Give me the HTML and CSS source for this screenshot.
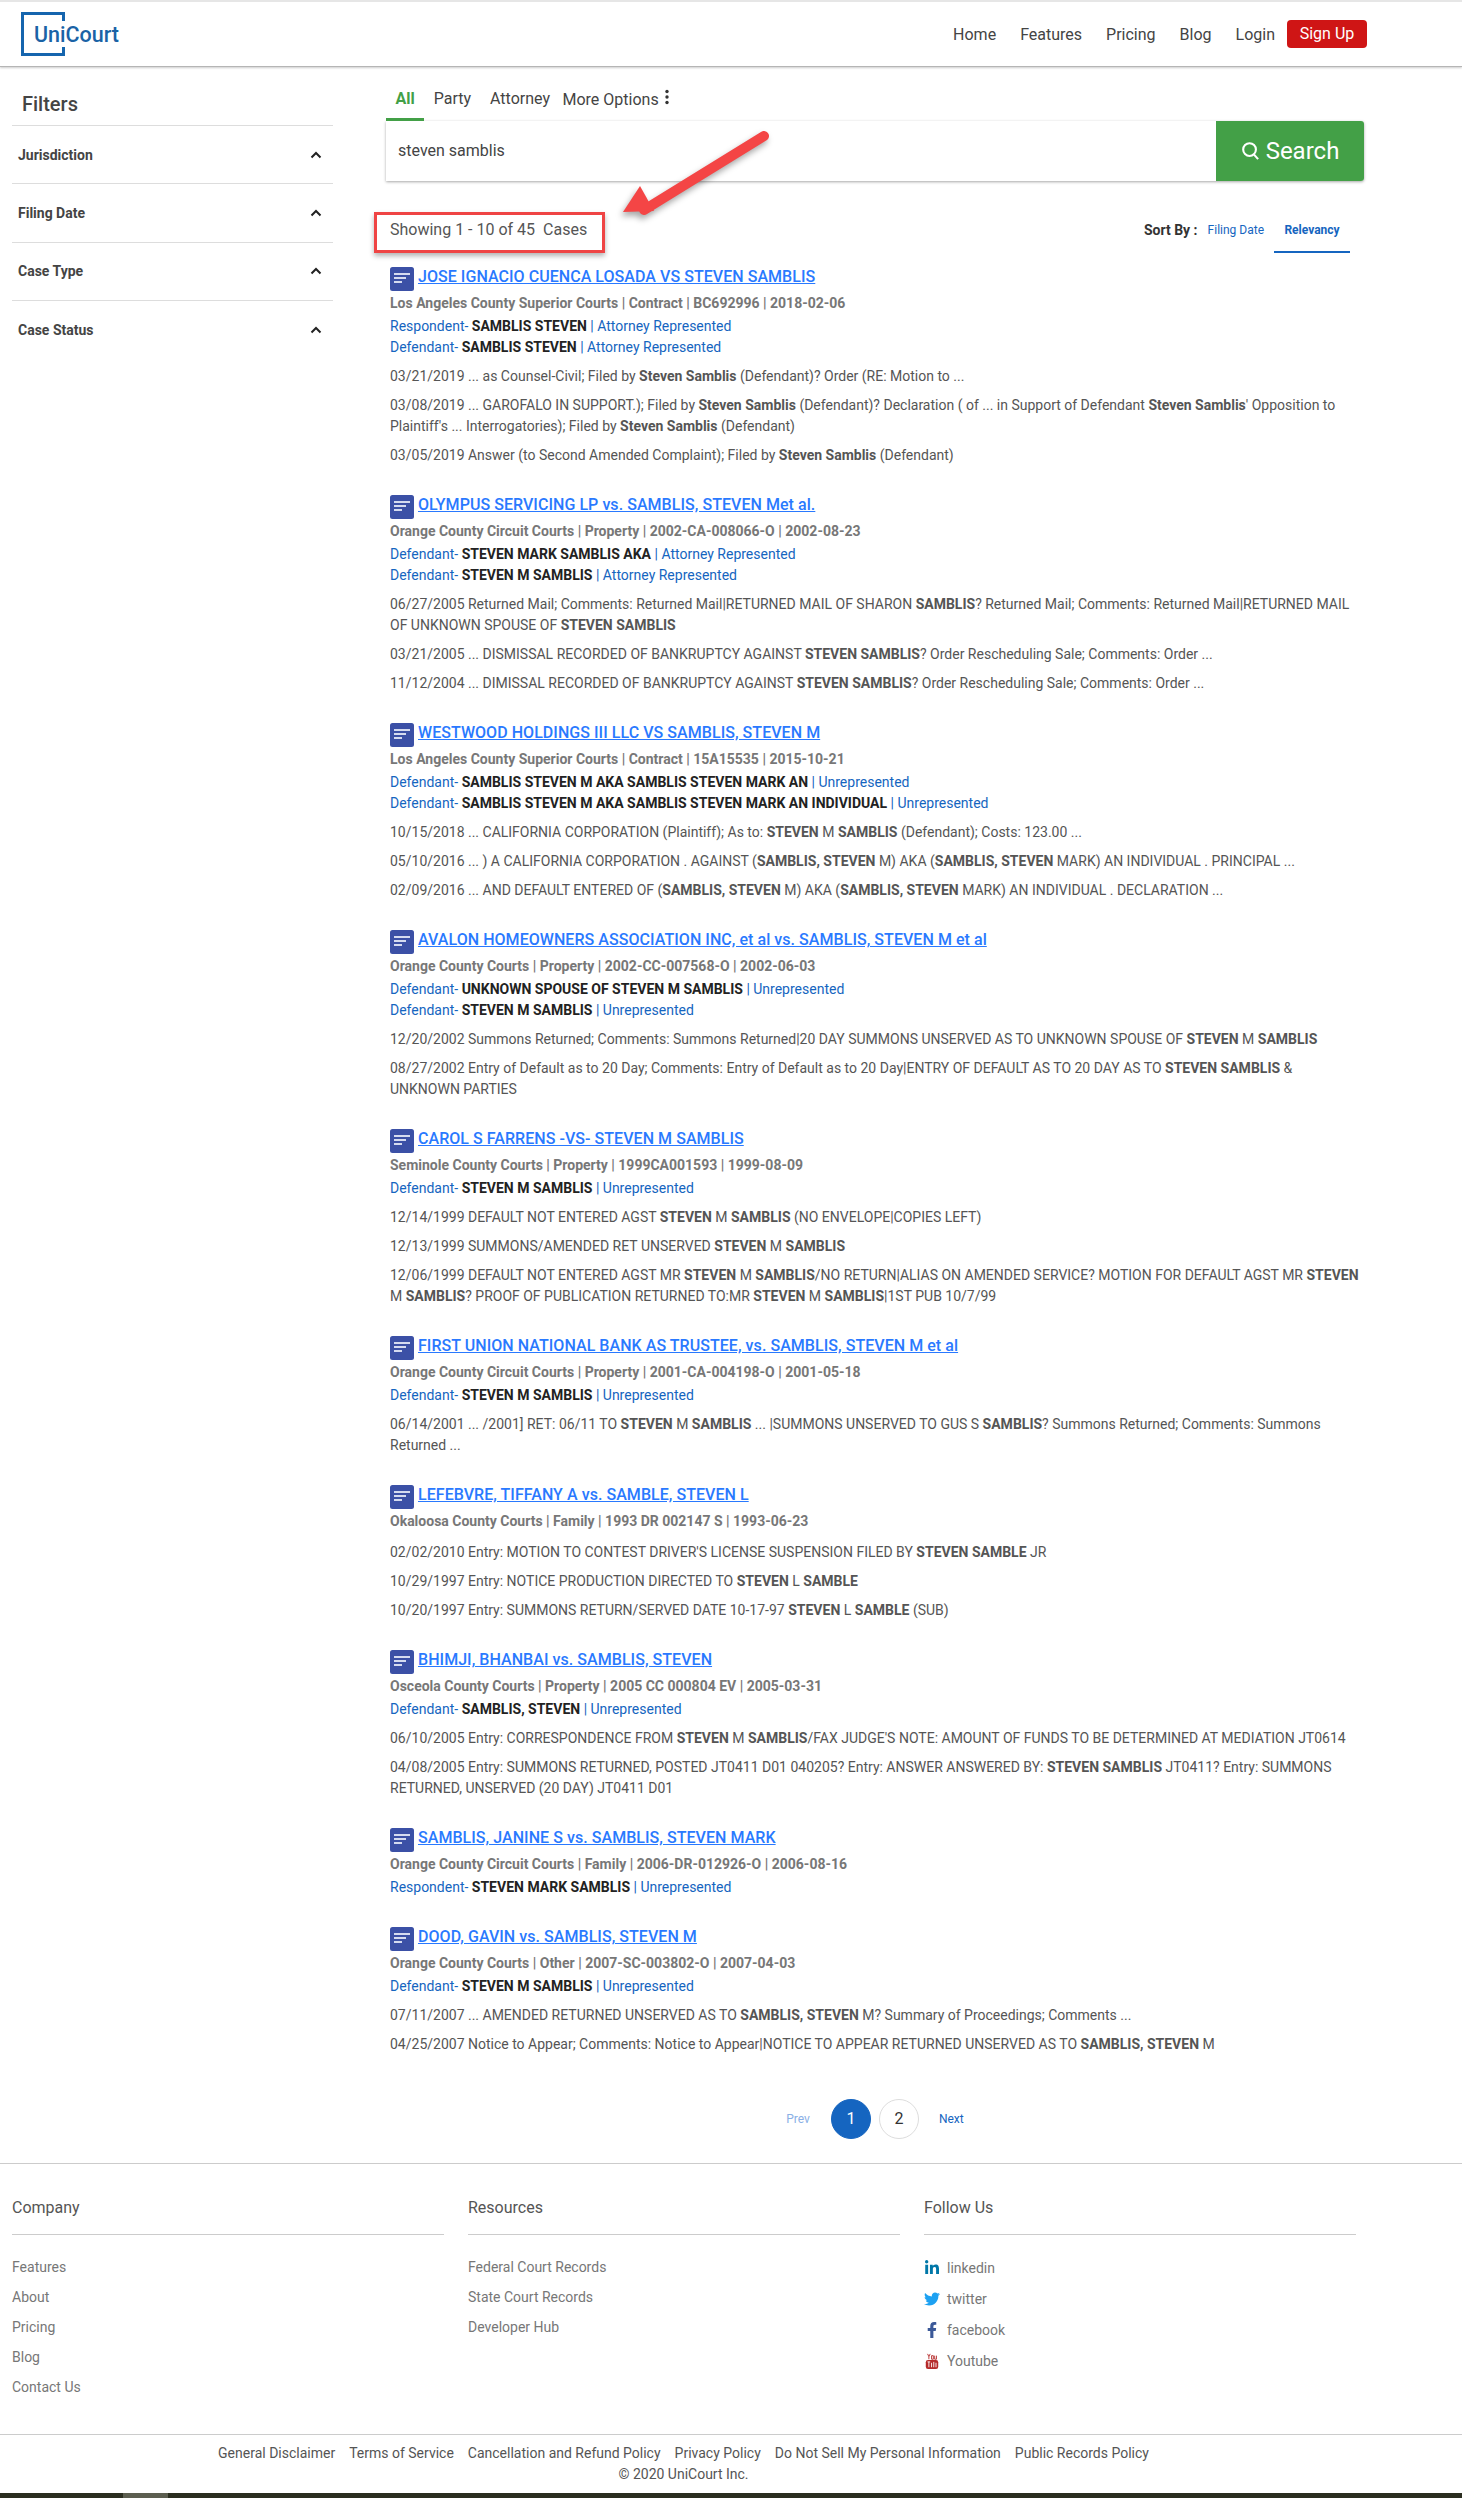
FILE: index.html
```html
<!DOCTYPE html>
<html lang="en">
<head>
    <meta charset="UTF-8">
    <title>UniCourt - steven samblis</title>
    <link rel="stylesheet" href="styles.css">
</head>
<body>
    <header class="topbar">
        <a class="logo" href="#"><span>UniCourt</span></a>
        <nav class="topnav">
            <a href="#">Home</a>
            <a href="#">Features</a>
            <a href="#">Pricing</a>
            <a href="#">Blog</a>
            <a href="#">Login</a>
            <a class="signup" href="#">Sign Up</a>
        </nav>
    </header>

    <div class="page">
        <aside class="filters">
            <h2>Filters</h2>
            <div class="filter"><span>Jurisdiction</span><svg viewBox="0 0 12 8"><polyline points="1.5,6.5 6,2 10.5,6.5"/></svg></div>
            <div class="filter"><span>Filing Date</span><svg viewBox="0 0 12 8"><polyline points="1.5,6.5 6,2 10.5,6.5"/></svg></div>
            <div class="filter"><span>Case Type</span><svg viewBox="0 0 12 8"><polyline points="1.5,6.5 6,2 10.5,6.5"/></svg></div>
            <div class="filter"><span>Case Status</span><svg viewBox="0 0 12 8"><polyline points="1.5,6.5 6,2 10.5,6.5"/></svg></div>
        </aside>

        <main class="content">
            <div class="tabs">
                <a class="tab active" href="#">All</a>
                <a class="tab" href="#">Party</a>
                <a class="tab" href="#">Attorney</a>
                <a class="tab more" href="#">More Options
                    <svg viewBox="0 0 4 16"><circle cx="2" cy="2.5" r="1.7"/><circle cx="2" cy="8" r="1.7"/><circle cx="2" cy="13.5" r="1.7"/></svg>
                </a>
            </div>

            <div class="searchbar">
                <div class="query">steven samblis</div>
                <button class="searchbtn">
                    <svg viewBox="0 0 20 20"><circle cx="9" cy="8.5" r="6.7"/><line x1="13.5" y1="13.5" x2="18" y2="18.5"/></svg>
                    Search
                </button>
            </div>

            <div class="toolbar">
                <div class="showing">Showing 1 - 10 of 45&nbsp; Cases</div>
                <div class="sort">
                    <b>Sort By :</b>
                    <a href="#">Filing Date</a>
                    <a class="current" href="#">Relevancy</a>
                </div>
            </div>

            <article class="result">
                <h3><svg class="doc" viewBox="0 0 24 24"><rect width="24" height="24" rx="2.5"/><path d="M4 6h16v2H4zM4 10h12v2H4zM4 14h8v2H4z"/></svg><a href="#">JOSE IGNACIO CUENCA LOSADA VS STEVEN SAMBLIS</a></h3>
                <div class="meta">Los Angeles County Superior Courts | Contract | BC692996 | 2018-02-06</div>
                <div class="party">Respondent- <b>SAMBLIS STEVEN</b> | Attorney Represented</div>
                <div class="party">Defendant- <b>SAMBLIS STEVEN</b> | Attorney Represented</div>
                <p>03/21/2019 ... as Counsel-Civil; Filed by <b>Steven Samblis</b> (Defendant)? Order (RE: Motion to ...</p>
                <p>03/08/2019 ... GAROFALO IN SUPPORT.); Filed by <b>Steven Samblis</b> (Defendant)? Declaration ( of ... in Support of Defendant <b>Steven Samblis</b>' Opposition to Plaintiff's ... Interrogatories); Filed by <b>Steven Samblis</b> (Defendant)</p>
                <p>03/05/2019 Answer (to Second Amended Complaint); Filed by <b>Steven Samblis</b> (Defendant)</p>
            </article>

            <article class="result">
                <h3><svg class="doc" viewBox="0 0 24 24"><rect width="24" height="24" rx="2.5"/><path d="M4 6h16v2H4zM4 10h12v2H4zM4 14h8v2H4z"/></svg><a href="#">OLYMPUS SERVICING LP vs. SAMBLIS, STEVEN Met al.</a></h3>
                <div class="meta">Orange County Circuit Courts | Property | 2002-CA-008066-O | 2002-08-23</div>
                <div class="party">Defendant- <b>STEVEN MARK SAMBLIS AKA</b> | Attorney Represented</div>
                <div class="party">Defendant- <b>STEVEN M SAMBLIS</b> | Attorney Represented</div>
                <p>06/27/2005 Returned Mail; Comments: Returned Mail|RETURNED MAIL OF SHARON <b>SAMBLIS</b>? Returned Mail; Comments: Returned Mail|RETURNED MAIL OF UNKNOWN SPOUSE OF <b>STEVEN SAMBLIS</b></p>
                <p>03/21/2005 ... DISMISSAL RECORDED OF BANKRUPTCY AGAINST <b>STEVEN SAMBLIS</b>? Order Rescheduling Sale; Comments: Order ...</p>
                <p>11/12/2004 ... DIMISSAL RECORDED OF BANKRUPTCY AGAINST <b>STEVEN SAMBLIS</b>? Order Rescheduling Sale; Comments: Order ...</p>
            </article>

            <article class="result">
                <h3><svg class="doc" viewBox="0 0 24 24"><rect width="24" height="24" rx="2.5"/><path d="M4 6h16v2H4zM4 10h12v2H4zM4 14h8v2H4z"/></svg><a href="#">WESTWOOD HOLDINGS III LLC VS SAMBLIS, STEVEN M</a></h3>
                <div class="meta">Los Angeles County Superior Courts | Contract | 15A15535 | 2015-10-21</div>
                <div class="party">Defendant- <b>SAMBLIS STEVEN M AKA SAMBLIS STEVEN MARK AN</b> | Unrepresented</div>
                <div class="party">Defendant- <b>SAMBLIS STEVEN M AKA SAMBLIS STEVEN MARK AN INDIVIDUAL</b> | Unrepresented</div>
                <p>10/15/2018 ... CALIFORNIA CORPORATION (Plaintiff); As to: <b>STEVEN</b> M <b>SAMBLIS</b> (Defendant); Costs: 123.00 ...</p>
                <p>05/10/2016 ... ) A CALIFORNIA CORPORATION . AGAINST (<b>SAMBLIS, STEVEN</b> M) AKA (<b>SAMBLIS, STEVEN</b> MARK) AN INDIVIDUAL . PRINCIPAL ...</p>
                <p>02/09/2016 ... AND DEFAULT ENTERED OF (<b>SAMBLIS, STEVEN</b> M) AKA (<b>SAMBLIS, STEVEN</b> MARK) AN INDIVIDUAL . DECLARATION ...</p>
            </article>

            <article class="result">
                <h3><svg class="doc" viewBox="0 0 24 24"><rect width="24" height="24" rx="2.5"/><path d="M4 6h16v2H4zM4 10h12v2H4zM4 14h8v2H4z"/></svg><a href="#">AVALON HOMEOWNERS ASSOCIATION INC, et al vs. SAMBLIS, STEVEN M et al</a></h3>
                <div class="meta">Orange County Courts | Property | 2002-CC-007568-O | 2002-06-03</div>
                <div class="party">Defendant- <b>UNKNOWN SPOUSE OF STEVEN M SAMBLIS</b> | Unrepresented</div>
                <div class="party">Defendant- <b>STEVEN M SAMBLIS</b> | Unrepresented</div>
                <p>12/20/2002 Summons Returned; Comments: Summons Returned|20 DAY SUMMONS UNSERVED AS TO UNKNOWN SPOUSE OF <b>STEVEN</b> M <b>SAMBLIS</b></p>
                <p>08/27/2002 Entry of Default as to 20 Day; Comments: Entry of Default as to 20 Day|ENTRY OF DEFAULT AS TO 20 DAY AS TO <b>STEVEN SAMBLIS</b> &amp; UNKNOWN PARTIES</p>
            </article>

            <article class="result">
                <h3><svg class="doc" viewBox="0 0 24 24"><rect width="24" height="24" rx="2.5"/><path d="M4 6h16v2H4zM4 10h12v2H4zM4 14h8v2H4z"/></svg><a href="#">CAROL S FARRENS -VS- STEVEN M SAMBLIS</a></h3>
                <div class="meta">Seminole County Courts | Property | 1999CA001593 | 1999-08-09</div>
                <div class="party">Defendant- <b>STEVEN M SAMBLIS</b> | Unrepresented</div>
                <p>12/14/1999 DEFAULT NOT ENTERED AGST <b>STEVEN</b> M <b>SAMBLIS</b> (NO ENVELOPE|COPIES LEFT)</p>
                <p>12/13/1999 SUMMONS/AMENDED RET UNSERVED <b>STEVEN</b> M <b>SAMBLIS</b></p>
                <p>12/06/1999 DEFAULT NOT ENTERED AGST MR <b>STEVEN</b> M <b>SAMBLIS</b>/NO RETURN|ALIAS ON AMENDED SERVICE? MOTION FOR DEFAULT AGST MR <b>STEVEN</b> M <b>SAMBLIS</b>? PROOF OF PUBLICATION RETURNED TO:MR <b>STEVEN</b> M <b>SAMBLIS</b>|1ST PUB 10/7/99</p>
            </article>

            <article class="result">
                <h3><svg class="doc" viewBox="0 0 24 24"><rect width="24" height="24" rx="2.5"/><path d="M4 6h16v2H4zM4 10h12v2H4zM4 14h8v2H4z"/></svg><a href="#">FIRST UNION NATIONAL BANK AS TRUSTEE, vs. SAMBLIS, STEVEN M et al</a></h3>
                <div class="meta">Orange County Circuit Courts | Property | 2001-CA-004198-O | 2001-05-18</div>
                <div class="party">Defendant- <b>STEVEN M SAMBLIS</b> | Unrepresented</div>
                <p>06/14/2001 ... /2001] RET: 06/11 TO <b>STEVEN</b> M <b>SAMBLIS</b> ... |SUMMONS UNSERVED TO GUS S <b>SAMBLIS</b>? Summons Returned; Comments: Summons Returned ...</p>
            </article>

            <article class="result">
                <h3><svg class="doc" viewBox="0 0 24 24"><rect width="24" height="24" rx="2.5"/><path d="M4 6h16v2H4zM4 10h12v2H4zM4 14h8v2H4z"/></svg><a href="#">LEFEBVRE, TIFFANY A vs. SAMBLE, STEVEN L</a></h3>
                <div class="meta">Okaloosa County Courts | Family | 1993 DR 002147 S | 1993-06-23</div>
                <p>02/02/2010 Entry: MOTION TO CONTEST DRIVER'S LICENSE SUSPENSION FILED BY <b>STEVEN SAMBLE</b> JR</p>
                <p>10/29/1997 Entry: NOTICE PRODUCTION DIRECTED TO <b>STEVEN</b> L <b>SAMBLE</b></p>
                <p>10/20/1997 Entry: SUMMONS RETURN/SERVED DATE 10-17-97 <b>STEVEN</b> L <b>SAMBLE</b> (SUB)</p>
            </article>

            <article class="result">
                <h3><svg class="doc" viewBox="0 0 24 24"><rect width="24" height="24" rx="2.5"/><path d="M4 6h16v2H4zM4 10h12v2H4zM4 14h8v2H4z"/></svg><a href="#">BHIMJI, BHANBAI vs. SAMBLIS, STEVEN</a></h3>
                <div class="meta">Osceola County Courts | Property | 2005 CC 000804 EV | 2005-03-31</div>
                <div class="party">Defendant- <b>SAMBLIS, STEVEN</b> | Unrepresented</div>
                <p>06/10/2005 Entry: CORRESPONDENCE FROM <b>STEVEN</b> M <b>SAMBLIS</b>/FAX JUDGE'S NOTE: AMOUNT OF FUNDS TO BE DETERMINED AT MEDIATION JT0614</p>
                <p>04/08/2005 Entry: SUMMONS RETURNED, POSTED JT0411 D01 040205? Entry: ANSWER ANSWERED BY: <b>STEVEN SAMBLIS</b> JT0411? Entry: SUMMONS RETURNED, UNSERVED (20 DAY) JT0411 D01</p>
            </article>

            <article class="result">
                <h3><svg class="doc" viewBox="0 0 24 24"><rect width="24" height="24" rx="2.5"/><path d="M4 6h16v2H4zM4 10h12v2H4zM4 14h8v2H4z"/></svg><a href="#">SAMBLIS, JANINE S vs. SAMBLIS, STEVEN MARK</a></h3>
                <div class="meta">Orange County Circuit Courts | Family | 2006-DR-012926-O | 2006-08-16</div>
                <div class="party">Respondent- <b>STEVEN MARK SAMBLIS</b> | Unrepresented</div>
            </article>

            <article class="result">
                <h3><svg class="doc" viewBox="0 0 24 24"><rect width="24" height="24" rx="2.5"/><path d="M4 6h16v2H4zM4 10h12v2H4zM4 14h8v2H4z"/></svg><a href="#">DOOD, GAVIN vs. SAMBLIS, STEVEN M</a></h3>
                <div class="meta">Orange County Courts | Other | 2007-SC-003802-O | 2007-04-03</div>
                <div class="party">Defendant- <b>STEVEN M SAMBLIS</b> | Unrepresented</div>
                <p>07/11/2007 ... AMENDED RETURNED UNSERVED AS TO <b>SAMBLIS, STEVEN</b> M? Summary of Proceedings; Comments ...</p>
                <p>04/25/2007 Notice to Appear; Comments: Notice to Appear|NOTICE TO APPEAR RETURNED UNSERVED AS TO <b>SAMBLIS, STEVEN</b> M</p>
            </article>

            <div class="pager">
                <a class="prev" href="#">Prev</a>
                <a class="num on" href="#">1</a>
                <a class="num" href="#">2</a>
                <a class="next" href="#">Next</a>
            </div>
        </main>

        <!-- annotation drawn on top of the screenshot -->
        <svg class="arrow" viewBox="0 0 160 100">
            <line x1="142" y1="5" x2="22" y2="79"/>
            <polygon points="1,81 18,55 32,80"/>
        </svg>
    </div>

    <footer>
        <div class="footcols">
            <div class="footcol">
                <h4>Company</h4>
                <ul>
                    <li><a href="#">Features</a></li>
                    <li><a href="#">About</a></li>
                    <li><a href="#">Pricing</a></li>
                    <li><a href="#">Blog</a></li>
                    <li><a href="#">Contact Us</a></li>
                </ul>
            </div>
            <div class="footcol">
                <h4>Resources</h4>
                <ul>
                    <li><a href="#">Federal Court Records</a></li>
                    <li><a href="#">State Court Records</a></li>
                    <li><a href="#">Developer Hub</a></li>
                </ul>
            </div>
            <div class="footcol">
                <h4>Follow Us</h4>
                <ul class="social">
                    <li><svg viewBox="0 0 448 512" fill="#0077a8"><path d="M100.28 448H7.4V148.9h92.88zM53.79 108.1C24.09 108.1 0 83.5 0 53.8a53.79 53.79 0 0 1 107.58 0c0 29.7-24.1 54.3-53.79 54.3zM447.9 448h-92.68V302.4c0-34.7-.7-79.2-48.29-79.2-48.29 0-55.69 37.7-55.69 76.7V448h-92.78V148.9h89.08v40.8h1.3c12.4-23.5 42.69-48.3 87.88-48.3 94 0 111.28 61.9 111.28 142.3V448z"/></svg><a href="#">linkedin</a></li>
                    <li><svg viewBox="0 0 512 512" fill="#1da1f2"><path d="M459.37 151.716c.325 4.548.325 9.097.325 13.645 0 138.72-105.583 298.558-298.558 298.558-59.452 0-114.68-17.219-161.137-47.106 8.447.974 16.568 1.299 25.34 1.299 49.055 0 94.213-16.568 130.274-44.832-46.132-.975-84.792-31.188-98.112-72.772 6.498.974 12.995 1.624 19.818 1.624 9.421 0 18.843-1.3 27.614-3.573-48.081-9.747-84.143-51.98-84.143-102.985v-1.299c13.969 7.797 30.214 12.67 47.431 13.319-28.264-18.843-46.781-51.005-46.781-87.391 0-19.492 5.197-37.36 14.294-52.954 51.655 63.675 129.3 105.258 216.365 109.807-1.624-7.797-2.599-15.918-2.599-24.04 0-57.828 46.782-104.934 104.934-104.934 30.213 0 57.502 12.67 76.67 33.137 23.715-4.548 46.456-13.32 66.599-25.34-7.798 24.366-24.366 44.833-46.132 57.827 21.117-2.273 41.584-8.122 60.426-16.243-14.292 20.791-32.161 39.308-52.628 54.253z"/></svg><a href="#">twitter</a></li>
                    <li><svg viewBox="0 0 320 512" fill="#3b5998"><path d="M279.14 288l14.22-92.66h-88.91v-60.13c0-25.35 12.42-50.06 52.24-50.06h40.42V6.26S260.43 0 225.36 0c-73.22 0-121.08 44.38-121.08 124.72v70.62H22.89V288h81.39v224h100.17V288z"/></svg><a href="#">facebook</a></li>
                    <li><svg viewBox="0 0 16 18"><rect x="1" y="8" width="14" height="10" rx="2.5" fill="#b52a2a"/><path d="M3 1l1.500 3 1.500-3M4.500 4v3M7.500 3h2v4h-2zM11 3v4h2V3" fill="none" stroke="#b52a2a" stroke-width="1"/><path d="M3 10h3M4.500 10v6M7.500 11v5M10 10v6M12.500 11v5" fill="none" stroke="#fff" stroke-width="1"/></svg><a href="#">Youtube</a></li>
                </ul>
            </div>
        </div>

        <div class="legal">
            <div class="legal-links">
                <a href="#">General Disclaimer</a>
                <a href="#">Terms of Service</a>
                <a href="#">Cancellation and Refund Policy</a>
                <a href="#">Privacy Policy</a>
                <a href="#">Do Not Sell My Personal Information</a>
                <a href="#">Public Records Policy</a>
            </div>
            <div>&copy; 2020 UniCourt Inc.</div>
        </div>
        <div class="strip"><span></span></div>
    </footer>
</body>
</html>
```

FILE: styles.css
```css
* {
    box-sizing: border-box;
}

body {
    margin: 0;
    font-family: Roboto, "Liberation Sans", sans-serif;
    font-size: 14px;
    color: #555;
    background: #fff;
}

a {
    color: inherit;
    text-decoration: none;
}

/* top bar */

.topbar {
    height: 67px;
    display: flex;
    justify-content: space-between;
    align-items: center;
    padding: 0 95px 0 21px;
    border-top: 2px solid #e6e6e6;
    border-bottom: 1px solid #b5b5b5;
    box-shadow: 0 1px 2px rgba(0, 0, 0, 0.2);
}

.logo {
    position: relative;
    width: 44px;
    height: 44px;
    display: flex;
    align-items: center;
    padding-left: 10px;
    border: 3px solid #1565ae;
    border-right: none;
    color: #1a63a6;
    font-size: 21.5px;
    font-weight: 500;
    white-space: nowrap;
}

.logo::before,
.logo::after {
    content: "";
    position: absolute;
    right: 0;
    width: 3px;
    height: 6px;
    background: #1565ae;
}

.logo::before {
    top: 0;
}

.logo::after {
    bottom: 0;
}

.topnav {
    display: flex;
    align-items: center;
    gap: 24px;
    font-size: 16px;
    color: #444;
}

.signup {
    margin-left: -12px;
    width: 80px;
    height: 28px;
    line-height: 28px;
    text-align: center;
    background: #cf1515;
    color: #fff;
    border-radius: 4px;
}

/* layout */

.page {
    position: relative;
    display: flex;
}

.filters {
    width: 386px;
    flex-shrink: 0;
    padding: 0 53px 0 12px;
}

.filters h2 {
    margin: 0;
    height: 58px;
    padding: 25px 0 0 10px;
    font-size: 20px;
    line-height: 24px;
    font-weight: 500;
    color: #444;
}

.filter {
    height: 58.3px;
    padding: 0 11px 0 6px;
    display: flex;
    justify-content: space-between;
    align-items: center;
    border-top: 1px solid #ddd;
    font-weight: 700;
    color: #444;
}

.filter svg {
    width: 12px;
    height: 8px;
    fill: none;
    stroke: #222;
    stroke-width: 2;
}

.content {
    width: 978px;
    padding-top: 14px;
}

/* tabs + search */

.tabs {
    display: flex;
    height: 40px;
    font-size: 16px;
    color: #444;
}

.tab {
    padding: 8px 9.500px 0;
    border-bottom: 3px solid transparent;
}

.tab.active {
    color: #43a047;
    font-weight: 700;
    border-bottom-color: #43a047;
}

.tab.more {
    padding-left: 3px;
}

.tab.more svg {
    width: 4px;
    height: 16px;
    margin-left: 2px;
    fill: #333;
}

.searchbar {
    display: flex;
    height: 60px;
    box-shadow: 0 1px 3px rgba(0, 0, 0, 0.35);
    border-radius: 0 3px 3px 0;
}

.query {
    flex: 1;
    padding: 20px 12px;
    font-size: 16px;
    line-height: 20px;
    color: #444;
}

.searchbtn {
    width: 148px;
    display: flex;
    align-items: center;
    justify-content: center;
    gap: 6px;
    border: none;
    border-radius: 0 3px 3px 0;
    background: #43a047;
    color: #fff;
    font-family: inherit;
    font-size: 24px;
}

.searchbtn svg {
    width: 19px;
    height: 20px;
    fill: none;
    stroke: #fff;
    stroke-width: 2.2;
}

/* results */

.toolbar {
    display: flex;
    justify-content: space-between;
    margin-top: 31px;
    margin-bottom: 14px;
    padding-right: 14px;
}

.showing {
    margin-left: -12px;
    width: 231px;
    height: 41px;
    padding-left: 13px;
    line-height: 30px;
    font-size: 16px;
    color: #555;
    border: 3px solid #ef4444;
    box-shadow: 0 3px 5px rgba(0, 0, 0, 0.3);
}

.sort {
    display: flex;
    height: 41px;
    line-height: 37px;
    font-size: 12px;
    color: #1565c0;
}

.sort b {
    font-size: 14px;
    color: #333;
    margin-right: 10px;
}

.sort a {
    margin-right: 10px;
}

.sort .current {
    width: 76px;
    height: 41px;
    margin-right: 0;
    line-height: 36px;
    text-align: center;
    font-weight: 700;
    border-bottom: 2px solid #1565c0;
}

.result {
    margin-left: 4px;
    margin-bottom: 29px;
    width: 972px;
}

.result h3 {
    margin: 0;
    height: 26px;
    font-size: 16px;
    font-weight: 500;
    line-height: 20px;
    letter-spacing: 0.05px;
    color: #2979ff;
}

.result h3 a {
    text-decoration: underline;
}

.doc {
    float: left;
    width: 24px;
    height: 24px;
    margin-right: 4px;
    fill: #3b50a6;
}

.doc path {
    fill: #d5dbf0;
}

.meta {
    font-size: 14px;
    line-height: 21px;
    margin-bottom: 2px;
    font-weight: 700;
    color: #777;
}

.party {
    line-height: 21px;
    color: #1565c0;
}

.party b {
    color: #222;
}

.result p {
    margin: 8px 0 0;
    font-size: 14px;
    line-height: 21px;
    color: #555;
}

.result .meta + p {
    margin-top: 10px;
}

/* pagination */

.pager {
    display: flex;
    justify-content: center;
    align-items: center;
    gap: 8px;
    margin-top: 44px;
    padding-bottom: 24px;
    font-size: 12px;
}

.pager .prev {
    margin-right: 13px;
    color: #8ab0e6;
}

.pager .next {
    margin-left: 12px;
    color: #1565c0;
}

.num {
    width: 40px;
    height: 40px;
    line-height: 38px;
    text-align: center;
    border: 1px solid #ddd;
    border-radius: 50%;
    font-size: 16px;
    color: #333;
}

.num.on {
    background: #1565c0;
    border-color: #1565c0;
    color: #fff;
}

/* annotation */

.arrow {
    position: absolute;
    left: 622px;
    top: 64px;
    width: 160px;
    height: 100px;
    overflow: visible;
    filter: drop-shadow(-2px 4px 3px rgba(0, 0, 0, 0.35));
}

.arrow line {
    stroke: #f44545;
    stroke-width: 10;
    stroke-linecap: round;
}

.arrow polygon {
    fill: #f44545;
}

/* footer */

footer {
    border-top: 1px solid #ccc;
}

.footcols {
    display: grid;
    grid-template-columns: repeat(3, 432px);
    gap: 24px;
    padding: 33px 0 32px 12px;
    height: 270px;
}

.footcol h4 {
    margin: 0;
    height: 38px;
    line-height: 22px;
    font-size: 16px;
    font-weight: 400;
    color: #555;
    border-bottom: 1px solid #ccc;
}

.footcol ul {
    list-style: none;
    margin: 17px 0 0;
    padding: 0;
}

.footcol li {
    height: 30px;
    line-height: 30px;
    color: #777;
}

.social li {
    height: 31px;
    display: flex;
    align-items: center;
    gap: 7px;
}

.social svg {
    width: 16px;
    height: 16px;
}

.legal {
    padding: 8px 95px 8px 0;
    border-top: 1px solid #ccc;
    text-align: center;
    line-height: 21px;
    color: #555;
}

.legal-links {
    display: flex;
    justify-content: center;
    gap: 14px;
}

.strip {
    height: 5px;
    background: #2b2e20;
    padding-left: 123px;
}

.strip span {
    display: block;
    width: 45px;
    height: 5px;
    background: #5c5e50;
}
```
